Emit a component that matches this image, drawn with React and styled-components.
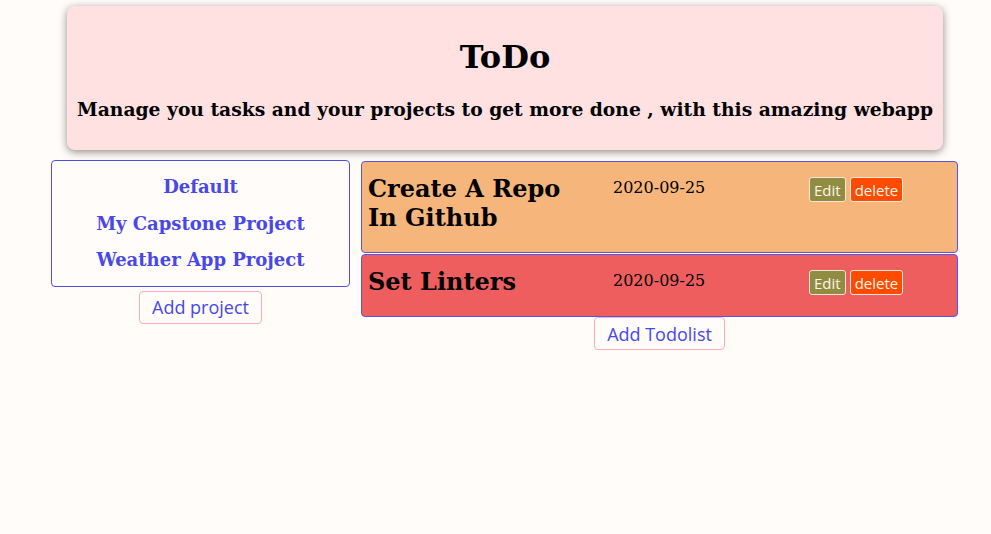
import React from "react";
import styled, { createGlobalStyle } from "styled-components";

const Global = createGlobalStyle`
  html, body { margin: 0; padding: 0; }
  body {
    background: #fffcfa;
    font-family: "DejaVu Serif", serif;
    width: 991px;
    height: 534px;
    overflow: hidden;
  }
`;

const Page = styled.div`
  display: flex;
  flex-direction: column;
  padding-top: 6px;
`;

const Header = styled.header`
  margin: 0 48px 0 67px;
  background: #ffe1e2;
  border-radius: 8px;
  box-shadow: 0 2px 8px rgba(0, 0, 0, 0.45);
  padding: 32px 0 30px;
  display: flex;
  flex-direction: column;
  align-items: center;
  gap: 22px;
`;

const Title = styled.h1`
  margin: 0;
  font-size: 32px;
  line-height: 38px;
  font-weight: bold;
  color: #000;
`;

const Subtitle = styled.h3`
  margin: 0;
  font-size: 18.72px;
  line-height: 22px;
  font-weight: bold;
  color: #000;
`;

const Main = styled.main`
  display: grid;
  grid-template-columns: 299px 597px;
  column-gap: 11px;
  margin: 10px 0 0 51px;
  align-items: start;
`;

const Column = styled.section`
  display: flex;
  flex-direction: column;
  align-items: center;
  gap: ${(p) => p.$gap}px;
  margin-top: ${(p) => p.$top}px;
`;

const ProjectBox = styled.ul`
  list-style: none;
  margin: 0;
  box-sizing: border-box;
  width: 100%;
  border: 1px solid #4f4fe6;
  border-radius: 4px;
  padding: 8px 0 7px;
  display: flex;
  flex-direction: column;
  align-items: center;
`;

const ProjectItem = styled.li`
  font-size: 18px;
  line-height: 36.5px;
  font-weight: bold;
  color: #4848e8;
  cursor: pointer;
`;

const AddButton = styled.button`
  font-family: "Open Sans", "Noto Sans", sans-serif;
  font-size: 18px;
  height: 33px;
  padding: 0 12px;
  color: #4848e8;
  background: #fffcfa;
  border: 1px solid #ffadb6;
  border-radius: 4px;
`;

const TodoList = styled.div`
  width: 100%;
  display: flex;
  flex-direction: column;
  gap: 1px;
`;

const Card = styled.article`
  box-sizing: border-box;
  background: ${(p) => p.$bg};
  border: 1px solid #5656e6;
  border-radius: 4px;
  padding: 12px 6px 20px;
  display: grid;
  grid-template-columns: 220px 171px auto;
  column-gap: 25px;
  align-items: start;
`;

const TodoTitle = styled.h2`
  margin: 0;
  font-size: 24px;
  line-height: 29px;
  font-weight: bold;
  color: #000;
`;

const DueDate = styled.span`
  font-size: 16px;
  line-height: 19px;
  padding-top: 4px;
  color: #000;
`;

const Actions = styled.div`
  display: flex;
  gap: 4px;
  margin-top: 3px;
`;

const SmallButton = styled.button`
  font-family: "Open Sans", "Noto Sans", sans-serif;
  font-size: 15px;
  height: 25px;
  padding: 0 4px;
  color: #fff6ea;
  background: ${(p) => p.$bg};
  border: 1px solid #f1e7da;
  border-radius: 3px;
`;

const projects = ["Default", "My Capstone Project", "Weather App Project"];
const todos = [
  { title: "Create A Repo In Github", date: "2020-09-25", bg: "#f5b57b" },
  { title: "Set Linters", date: "2020-09-25", bg: "#ee5e5e" },
];

export default function App() {
  return (
    <Page>
      <Global />
      <Header>
        <Title>ToDo</Title>
        <Subtitle>
          Manage you tasks and your projects to get more done , with this amazing webapp
        </Subtitle>
      </Header>
      <Main>
        <Column $gap={4} $top={0}>
          <ProjectBox>
            {projects.map((p) => (
              <ProjectItem key={p}>{p}</ProjectItem>
            ))}
          </ProjectBox>
          <AddButton>Add project</AddButton>
        </Column>
        <Column $gap={0} $top={1}>
          <TodoList>
            {todos.map((t) => (
              <Card key={t.title} $bg={t.bg}>
                <TodoTitle>{t.title}</TodoTitle>
                <DueDate>{t.date}</DueDate>
                <Actions>
                  <SmallButton $bg="#908c42">Edit</SmallButton>
                  <SmallButton $bg="#ff4b00">delete</SmallButton>
                </Actions>
              </Card>
            ))}
          </TodoList>
          <AddButton>Add Todolist</AddButton>
        </Column>
      </Main>
    </Page>
  );
}
